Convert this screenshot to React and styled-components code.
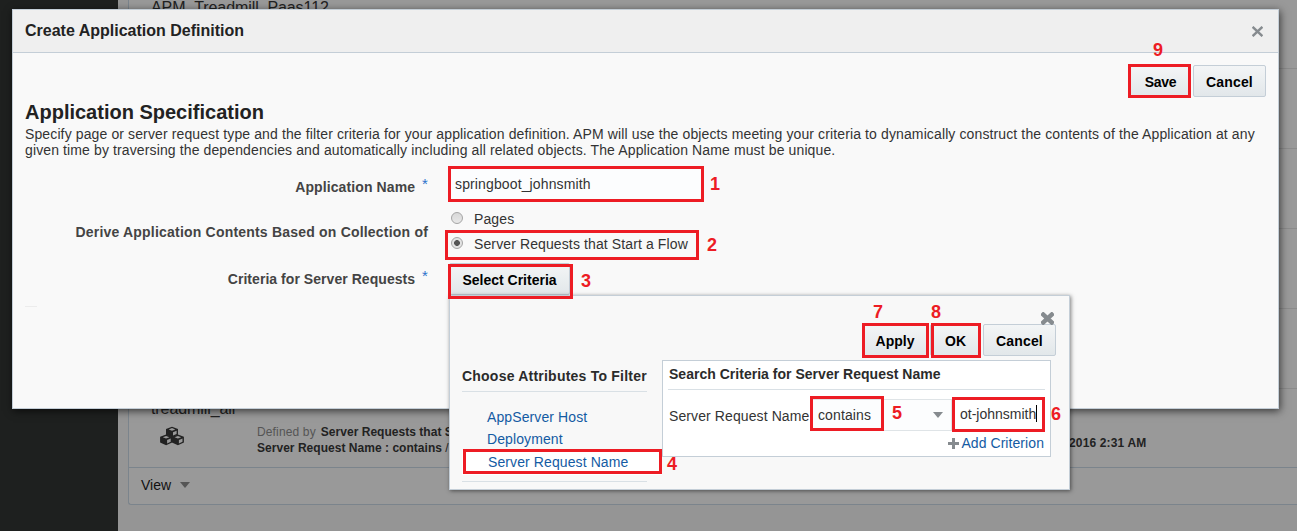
import React from 'react';
import styled, { createGlobalStyle } from 'styled-components';

const GlobalStyle = createGlobalStyle`
  * { box-sizing: border-box; }
  body {
    margin: 0;
    overflow: hidden;
    font: 14px/16px "Liberation Sans", Arial, sans-serif;
    color: #333;
  }
`;

const RED = '#ed1c24';
const LINE = '#c4ced7';

/* ---------- dimmed page behind the dialog ---------- */

const Screen = styled.div`
  position: relative;
  display: flex;
  width: 1297px;
  height: 531px;
  overflow: hidden;
  background: #959595;
`;

const Sidebar = styled.div`
  flex: none;
  width: 118px;
  background: #1e201f;
`;

const Main = styled.div`
  flex: 1;
  min-width: 0;
  padding-left: 10px;
`;

const ListCard = styled.div`
  height: 505px;
  overflow: hidden;
  display: flex;
  flex-direction: column;
  justify-content: flex-end;
  border: 1px solid #7b848c;
  border-width: 0 0 1px 1px;
  border-radius: 0 0 0 3px;
  background: #999;
`;

const ListItem = styled.div`
  flex: none;
  height: ${p => p.$h || 80}px;
  padding: ${p => p.$pad || 10}px 22px 0;
  border-bottom: 1px solid ${p => p.$line || '#8b8b8b'};
  color: #222;
`;

const ItemName = styled.div`
  font-size: 16px;
  line-height: 18px;
  letter-spacing: -0.09px;
`;

const ItemDetail = styled.div`
  display: flex;
  align-items: flex-start;
  padding-top: 6px;
  font-size: 12px;
`;

const CubesIcon = styled.svg`
  flex: none;
  width: 24px;
  height: 20px;
  margin: 2px 72px 0 9px;
`;

const Definition = styled.div`
  width: 813px;
  padding-left: 1px;
  white-space: pre;
  letter-spacing: 0.03px;
`;

const Muted = styled.span`
  margin-right: 5px;
  color: #555;
  letter-spacing: 0.14px;
`;

const Stamp = styled.b`
  padding-top: 11px;
  letter-spacing: 0.15px;
`;

const CardFooter = styled.div`
  flex: none;
  height: 36px;
  display: flex;
  align-items: center;
  gap: 9px;
  padding: 0 0 2px 12px;
  color: #111;
`;

const Caret = styled.i`
  width: 0;
  height: 0;
  border: solid transparent;
  border-width: 6px 5px 0;
  border-top-color: ${p => p.$color};
`;

/* ---------- shared controls ---------- */

const Button = styled.button`
  flex: none;
  width: ${p => p.$w}px;
  height: 32px;
  padding: 2px 0 0;
  border: 1px solid ${LINE};
  border-radius: 2px;
  background: linear-gradient(#f3f5f6, #e2e7ea);
  font: bold 14px/16px "Liberation Sans", Arial, sans-serif;
  letter-spacing: ${p => p.$ls || 0}px;
  white-space: nowrap;
  color: #000;
`;

const Highlight = styled.div`
  position: absolute;
  left: ${p => p.$x}px;
  top: ${p => p.$y}px;
  width: ${p => p.$w}px;
  height: ${p => p.$h}px;
  border: 3px solid ${RED};
`;

const StepNumber = styled.span`
  position: absolute;
  left: ${p => p.$x}px;
  top: ${p => p.$y}px;
  font-size: 18px;
  line-height: 20px;
  font-weight: bold;
  color: ${RED};
`;

/* ---------- dialog ---------- */

const Dialog = styled.section`
  position: absolute;
  left: 12px;
  top: 9px;
  width: 1267px;
  height: 400px;
  border: 1px solid ${LINE};
  background: #f9f9f9;
  box-shadow: 1px 2px 8px rgba(0, 0, 0, 0.65);
`;

const DialogHeader = styled.header`
  display: flex;
  justify-content: space-between;
  align-items: center;
  height: 43px;
  padding: 0 15px 0 12px;
  border-bottom: 1px solid ${LINE};
  background: #efefef;
`;

const DialogTitle = styled.h1`
  margin: 0;
  font-size: 16px;
  line-height: 18px;
  color: #222;
`;

const CrossIcon = styled.svg`
  display: block;
  width: ${p => p.$size}px;
  height: ${p => p.$size}px;
`;

const DialogActions = styled.div`
  display: flex;
  justify-content: flex-end;
  gap: 2px;
  padding: 12px 12px 0;
`;

const Heading = styled.h2`
  margin: 3px 0 0 12px;
  font-size: 20px;
  line-height: 24px;
  color: #222;
`;

const Intro = styled.p`
  margin: 2px 0 0 12px;
  white-space: pre;
  letter-spacing: 0.12px;
`;

const Form = styled.div`
  display: grid;
  grid-template-columns: 415px auto;
  grid-template-rows: 49px 48px 46px;
  column-gap: 21px;
  padding-top: 4px;
  justify-content: start;
`;

const Label = styled.label`
  justify-self: end;
  padding-top: ${p => p.$top}px;
  font-weight: bold;
  letter-spacing: ${p => p.$ls}px;
  color: #444;
  white-space: pre;
`;

const Star = styled.sup`
  position: relative;
  top: -3px;
  margin-left: 7px;
  font-size: 15px;
  line-height: 0;
  font-weight: normal;
  vertical-align: baseline;
  color: #2c72cc;
`;

const TextField = styled.div`
  width: 254px;
  height: 32px;
  margin-top: 6px;
  padding: 8px 5px;
  border: 1px solid #dfe4e7;
  background: #fcfdfe;
  line-height: 15px;
  letter-spacing: 0.13px;
`;

const Options = styled.div`
  display: flex;
  flex-direction: column;
  gap: 9px;
`;

const Option = styled.div`
  display: flex;
  align-items: flex-start;
  gap: 11px;
  letter-spacing: 0.115px;
`;

const Radio = styled.i`
  width: 12px;
  height: 12px;
  margin: 1px 0 0 2px;
  border: 1px solid #a5a5a5;
  border-radius: 50%;
  background: ${p => (p.$on ? 'radial-gradient(circle, #555 0 2.6px, #e2e2e2 3.2px)' : 'linear-gradient(#d8d8d8, #e8e8e8)')};
`;

const ButtonCell = styled.div`
  padding-top: 4px;
`;

const ShortRule = styled.div`
  width: 12px;
  height: 1px;
  margin: 1px 0 0 12px;
  background: #ececec;
`;

/* ---------- criteria popup ---------- */

const Popup = styled.section`
  position: absolute;
  left: 449px;
  top: 295px;
  width: 621px;
  height: 195px;
  padding-top: 15px;
  border: 1px solid ${LINE};
  background: #f8f8f8;
  box-shadow: 1px 1px 4px rgba(0, 0, 0, 0.5);
`;

const PopupClose = styled.div`
  position: absolute;
  right: 15px;
  top: 16px;
`;

const PopupActions = styled.div`
  display: flex;
  justify-content: flex-end;
  gap: 2px;
  padding: 13px 13px 0 0;
`;

const PopupBody = styled.div`
  display: grid;
  grid-template-columns: 185px 389px;
  column-gap: 15px;
  padding: 4px 0 0 12px;
`;

const Attributes = styled.div`
  padding-top: 8px;
`;

const PanelTitle = styled.h3`
  margin: 0;
  padding-bottom: ${p => p.$pb}px;
  border-bottom: 1px solid #d9e0e5;
  font-size: 14px;
  line-height: 16px;
  white-space: nowrap;
  letter-spacing: ${p => p.$ls || 0}px;
  color: #2b2b2b;
`;

const AttributeList = styled.div`
  height: 90px;
  padding-top: 13px;
  border-bottom: 1px solid #d9e0e5;
`;

const Attribute = styled.div`
  width: ${p => (p.$active ? '200px' : 'auto')};
  height: ${p => (p.$active ? 25 : 22)}px;
  margin-top: ${p => (p.$active ? 1 : 0)}px;
  padding: ${p => (p.$active ? '4px 0 0 26px' : '4px 0 0 25px')};
  background: ${p => (p.$active ? '#fff' : 'none')};
  letter-spacing: 0.1px;
  color: #145ba3;
`;

const Criteria = styled.div`
  height: 97px;
  padding: 5px 5px 0;
  border: 1px solid ${LINE};
  background: #fff;
`;

const CriteriaTitle = styled(PanelTitle)`
  padding-left: 1px;
`;

const CriterionRow = styled.div`
  display: flex;
  align-items: center;
  height: 35px;
  margin-top: 7px;
  padding-left: 1px;
`;

const CriterionName = styled.div`
  width: 143px;
  padding-top: 3px;
  letter-spacing: 0.1px;
  white-space: nowrap;
`;

const Operator = styled.div`
  display: flex;
  align-items: center;
  justify-content: space-between;
  width: 140px;
  height: 32px;
  margin-top: 1px;
  padding: 0 8px 1px 5px;
  border: 1px solid #dfe4e7;
  background: #fcfdfe;
  letter-spacing: 0.11px;
`;

const ValueField = styled.div`
  display: flex;
  align-items: center;
  width: 93px;
  height: 33px;
  padding-left: 8px;
  padding-bottom: 2px;
  background: #fff;
  white-space: nowrap;
`;

const TextCursor = styled.i`
  width: 1px;
  height: 17px;
  background: #000;
`;

const AddCriterion = styled.div`
  display: flex;
  justify-content: flex-end;
  align-items: center;
  gap: 2px;
  padding: 3px 1px 0 0;
  letter-spacing: 0.07px;
  color: #145ba3;
`;

const PlusIcon = styled.svg`
  width: 11px;
  height: 11px;
  fill: #868b8f;
`;

const highlights = [
  [1128, 64, 63, 34],
  [448, 166, 256, 36],
  [445, 230, 254, 30],
  [448, 264, 125, 35],
  [463, 449, 199, 25],
  [810, 396, 74, 35],
  [952, 397, 93, 35],
  [862, 323, 67, 35],
  [931, 323, 50, 35],
];

const steps = [
  [1, 710, 174], [2, 707, 235], [3, 581, 271], [4, 667, 454], [5, 892, 403],
  [6, 1051, 404], [7, 873, 302], [8, 931, 302], [9, 1153, 40],
];

function Cross({ size, thick }) {
  return (
    <CrossIcon $size={size} viewBox="0 0 10 10">
      <path d="M0.5 0.8L9.5 9.2M9.5 0.8L0.5 9.2" stroke="#868b8f" strokeWidth={thick} fill="none" />
    </CrossIcon>
  );
}

function Cube({ x, y }) {
  return (
    <g transform={`translate(${x} ${y})`}>
      <path d="M6 0L12 2.2V8L6 10.6L0 8V2.2Z" fill="#222" />
      <path d="M6 1.3L9.3 2.6L6 3.9L2.7 2.6Z" fill="#999" />
      <path d="M7 5.5L10.6 4V7.2L7 8.8Z" fill="#999" />
    </g>
  );
}

export default function App() {
  return (
    <Screen>
      <GlobalStyle />
      <Sidebar />
      <Main>
        <ListCard>
          <ListItem><ItemName>APM_Treadmill_Paas112</ItemName></ListItem>
          <ListItem />
          <ListItem />
          <ListItem />
          <ListItem />
          <ListItem $h={79} $pad={11} $line="#7b848c">
            <ItemName>treadmill_all</ItemName>
            <ItemDetail>
              <CubesIcon viewBox="0 0 24 20">
                <Cube x={6} y={0.8} />
                <Cube x={0.1} y={8.6} />
                <Cube x={11.9} y={8.6} />
              </CubesIcon>
              <Definition>
                <Muted>Defined by</Muted><b>Server Requests that Start a Flow</b>{'\n'}
                <b>Server Request Name : contains </b>/
              </Definition>
              <Stamp>2016 2:31 AM</Stamp>
            </ItemDetail>
          </ListItem>
          <CardFooter>View <Caret $color="#555" /></CardFooter>
        </ListCard>
      </Main>

      <Dialog>
        <DialogHeader>
          <DialogTitle>Create Application Definition</DialogTitle>
          <Cross size={11} thick={2.3} />
        </DialogHeader>
        <DialogActions>
          <Button $w={61} $ls={-0.3}>Save</Button>
          <Button $w={73} $ls={0.15}>Cancel</Button>
        </DialogActions>
        <Heading>Application Specification</Heading>
        <Intro>
          Specify page or server request type and the filter criteria for your application definition. APM will use the objects meeting your criteria to dynamically construct the contents of the Application at any{'\n'}
          given time by traversing the dependencies and automatically including all related objects. The Application Name must be unique.
        </Intro>
        <Form>
          <Label $top={17} $ls={0.1}>Application Name<Star>*</Star></Label>
          <TextField>springboot_johnsmith</TextField>
          <Label $top={13} $ls={0.2}>Derive Application Contents Based on Collection of</Label>
          <Options>
            <Option><Radio />Pages</Option>
            <Option><Radio $on />Server Requests that Start a Flow</Option>
          </Options>
          <Label $top={12} $ls={0.05}>Criteria for Server Requests<Star>*</Star></Label>
          <ButtonCell><Button $w={121}>Select Criteria</Button></ButtonCell>
        </Form>
        <ShortRule />
      </Dialog>

      <Popup>
        <PopupClose><Cross size={13} thick={3.4} /></PopupClose>
        <PopupActions>
          <Button $w={66}>Apply</Button>
          <Button $w={51}>OK</Button>
          <Button $w={73} $ls={0.15}>Cancel</Button>
        </PopupActions>
        <PopupBody>
          <Attributes>
            <PanelTitle $pb={7} $ls={0.22}>Choose Attributes To Filter</PanelTitle>
            <AttributeList>
              <Attribute>AppServer Host</Attribute>
              <Attribute>Deployment</Attribute>
              <Attribute $active>Server Request Name</Attribute>
            </AttributeList>
          </Attributes>
          <Criteria>
            <CriteriaTitle $pb={7} $ls={0.02}>Search Criteria for Server Request Name</CriteriaTitle>
            <CriterionRow>
              <CriterionName>Server Request Name</CriterionName>
              <Operator>contains <Caret $color="#868b8f" /></Operator>
              <ValueField>ot-johnsmith<TextCursor /></ValueField>
            </CriterionRow>
            <AddCriterion>
              <PlusIcon viewBox="0 0 11 11"><path d="M4 0h3v4h4v3H7v4H4V7H0V4h4z" /></PlusIcon>
              Add Criterion
            </AddCriterion>
          </Criteria>
        </PopupBody>
      </Popup>

      {highlights.map(([x, y, w, h]) => <Highlight key={`${x}-${y}`} $x={x} $y={y} $w={w} $h={h} />)}
      {steps.map(([n, x, y]) => <StepNumber key={n} $x={x} $y={y}>{n}</StepNumber>)}
    </Screen>
  );
}
